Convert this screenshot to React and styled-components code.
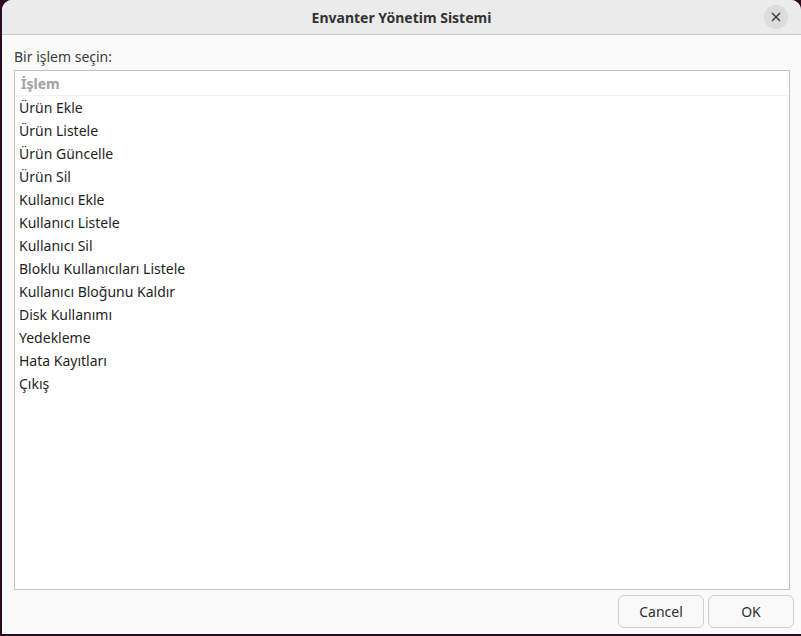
import React from 'react';
import styled, { createGlobalStyle } from 'styled-components';

const ITEMS = [
  'Ürün Ekle',
  'Ürün Listele',
  'Ürün Güncelle',
  'Ürün Sil',
  'Kullanıcı Ekle',
  'Kullanıcı Listele',
  'Kullanıcı Sil',
  'Bloklu Kullanıcıları Listele',
  'Kullanıcı Bloğunu Kaldır',
  'Disk Kullanımı',
  'Yedekleme',
  'Hata Kayıtları',
  'Çıkış',
];

const Global = createGlobalStyle`
  html, body {
    margin: 0;
    padding: 0;
    background: #2c0b21;
  }
  body {
    font-family: "Noto Sans", "Open Sans", sans-serif;
    font-size: 14px;
    color: #2e2e2e;
  }
`;

const Screen = styled.div`
  width: 801px;
  height: 636px;
  padding: 0 0 2px 2px;
  box-sizing: border-box;
  background: #2c0b21;
  display: flex;
`;

const Window = styled.div`
  flex: 1;
  display: flex;
  flex-direction: column;
  background: #fafafa;
  border-radius: 10px 10px 0 0;
  overflow: hidden;
`;

const TitleBar = styled.div`
  height: 34px;
  flex: none;
  display: grid;
  grid-template-columns: 40px 1fr 40px;
  align-items: center;
  background: #ebebeb;
  border-bottom: 1px solid #c9c9c9;
`;

const Title = styled.div`
  grid-column: 2;
  text-align: center;
  font-weight: 700;
  font-size: 14px;
  color: #333;
`;

const CloseButton = styled.button`
  grid-column: 3;
  justify-self: start;
  width: 24px;
  height: 24px;
  margin-left: 3px;
  border: none;
  border-radius: 50%;
  background: #dcdcdc;
  padding: 0;
  display: flex;
  align-items: center;
  justify-content: center;
`;

const Body = styled.div`
  flex: 1;
  display: flex;
  flex-direction: column;
  padding: 12px 7px 6px 12px;
`;

const Label = styled.div`
  height: 23px;
  line-height: 20px;
  color: #3b3b3b;
`;

const ListBox = styled.div`
  flex: 1;
  margin-right: 4px;
  border: 1px solid #c2c2c2;
  background: #fff;
  display: flex;
  flex-direction: column;
`;

const HeaderRow = styled.div`
  height: 24px;
  padding: 0 6px;
  display: flex;
  align-items: center;
  font-weight: 700;
  color: #a3a3a3;
  border-bottom: 1px solid #f2f2f2;
`;

const Row = styled.div`
  height: 23px;
  padding: 0 4px;
  display: flex;
  align-items: center;
  color: #1e1e1e;
`;

const Footer = styled.div`
  display: flex;
  justify-content: flex-end;
  gap: 4px;
  padding-top: 5px;
`;

const Button = styled.button`
  width: 86px;
  height: 33px;
  padding-bottom: 2px;
  border: 1px solid #cfcfcf;
  border-radius: 6px;
  background: #f9f9f9;
  font-family: inherit;
  font-size: 14px;
  color: #2e2e2e;
`;

export default function App() {
  return (
    <>
      <Global />
      <Screen>
        <Window>
          <TitleBar>
            <Title>Envanter Yönetim Sistemi</Title>
            <CloseButton aria-label="Kapat">
              <svg width="10" height="10" viewBox="0 0 10 10">
                <path d="M1 1L9 9M9 1L1 9" stroke="#3a3a3a" strokeWidth="1.4" />
              </svg>
            </CloseButton>
          </TitleBar>
          <Body>
            <Label>Bir işlem seçin:</Label>
            <ListBox>
              <HeaderRow>İşlem</HeaderRow>
              {ITEMS.map((item) => (
                <Row key={item}>{item}</Row>
              ))}
            </ListBox>
            <Footer>
              <Button>Cancel</Button>
              <Button>OK</Button>
            </Footer>
          </Body>
        </Window>
      </Screen>
    </>
  );
}
